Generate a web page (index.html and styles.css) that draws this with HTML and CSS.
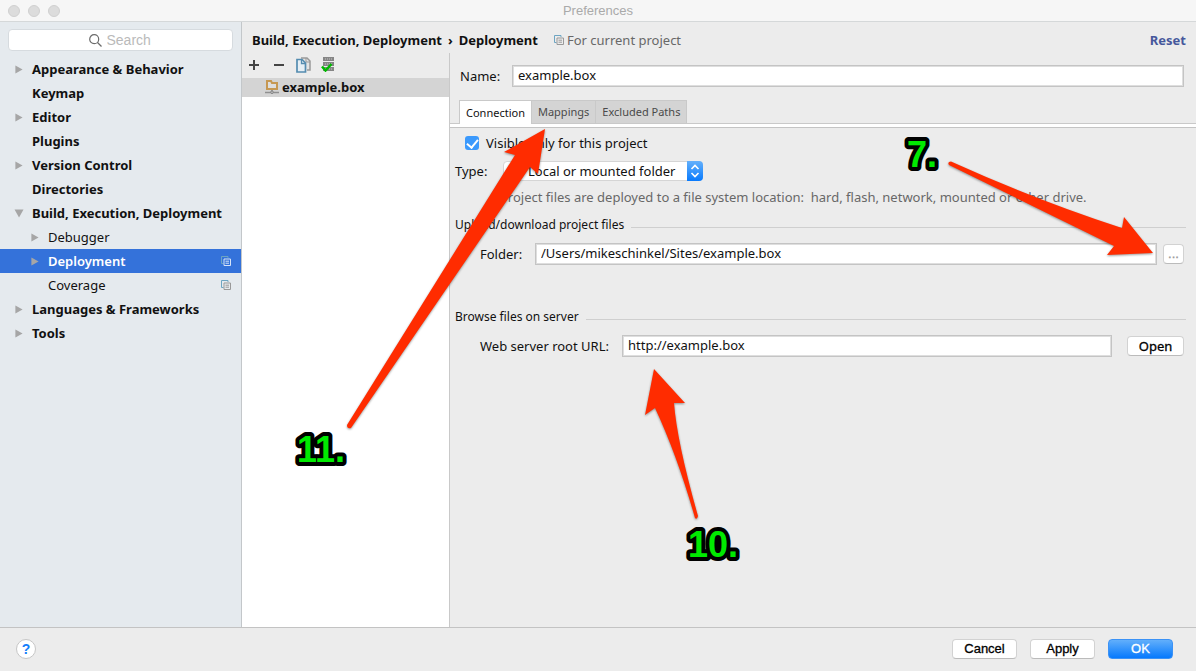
FILE: index.html
```html
<!DOCTYPE html>
<html lang="en">
<head>
<meta charset="utf-8">
<title>Preferences</title>
<link rel="stylesheet" href="styles.css">
</head>
<body>
<svg class="defs" width="0" height="0" aria-hidden="true">
  <symbol id="right" viewBox="0 0 8 10"><path d="M0 .5 8 5 0 9.500z" fill="#a6a6a6"/></symbol>
  <symbol id="down" viewBox="0 0 10 8"><path d="M.5 0h9L5 8z" fill="#a6a6a6"/></symbol>
  <symbol id="copy" viewBox="0 0 10 10"><path d="M2.500 7.500h-2v-7h6.500v1.500" fill="none" class="copy-back"/><path d="M3 3h6.500v6.500H3zM4.500 5.200h3.500M4.500 7.200h3.500" fill="none"/></symbol>
</svg>
<div class="window">
  <header class="titlebar">
    <div class="lights"><i></i><i></i><i></i></div>
    <h1>Preferences</h1>
  </header>
  <div class="body">
    <aside class="sidebar">
      <label class="search">
        <svg width="13" height="13" viewBox="0 0 13 13"><circle cx="5.200" cy="5.200" r="4.500" fill="none" stroke="#6b6b6b" stroke-width="1.200"/><path d="m8.500 8.500 4 4" stroke="#6b6b6b" stroke-width="1.300"/></svg>
        <input type="text" placeholder="Search" aria-label="Search">
      </label>
      <nav class="tree">
        <a href="#"><svg class="arrow"><use href="#right"/></svg>Appearance &amp; Behavior</a>
        <a href="#"><span class="arrow"></span>Keymap</a>
        <a href="#"><svg class="arrow"><use href="#right"/></svg>Editor</a>
        <a href="#"><span class="arrow"></span>Plugins</a>
        <a href="#"><svg class="arrow"><use href="#right"/></svg>Version Control</a>
        <a href="#"><span class="arrow"></span>Directories</a>
        <a href="#"><svg class="arrow"><use href="#down"/></svg>Build, Execution, Deployment</a>
        <a href="#" class="child"><svg class="arrow"><use href="#right"/></svg>Debugger</a>
        <a href="#" class="child selected"><svg class="arrow"><use href="#right"/></svg>Deployment<svg class="copy"><use href="#copy"/></svg></a>
        <a href="#" class="child"><span class="arrow"></span>Coverage<svg class="copy"><use href="#copy"/></svg></a>
        <a href="#"><svg class="arrow"><use href="#right"/></svg>Languages &amp; Frameworks</a>
        <a href="#"><svg class="arrow"><use href="#right"/></svg>Tools</a>
      </nav>
    </aside>
    <main class="content">
      <div class="crumbs">
        <h2><span>Build, Execution, Deployment</span> <span>›</span> <span>Deployment</span></h2>
        <svg class="copy"><use href="#copy"/></svg>
        <span class="scope">For current project</span>
        <a class="reset" href="#">Reset</a>
      </div>
      <div class="split">
        <section class="servers">
          <div class="toolbar">
            <button aria-label="Add"><svg width="10" height="10" viewBox="0 0 10 10"><path d="M0 5h10M5 0v10" stroke="#444" stroke-width="2"/></svg></button>
            <button aria-label="Remove"><svg width="10" height="10" viewBox="0 0 10 10"><path d="M0 5h10" stroke="#444" stroke-width="2"/></svg></button>
            <button aria-label="Copy"><svg width="15" height="16" viewBox="0 0 15 16"><path d="M5 1h6l3 3v9h-3" fill="#e4e4e4" stroke="#999" stroke-width="1.500"/><path d="M10 1v4h4" fill="none" stroke="#999"/><path d="M1 2.500h5L9.500 6v9H1z" fill="#e6eff5" stroke="#548cb0" stroke-width="1.700"/><path d="M5.500 3v3.500H9" fill="none" stroke="#548cb0" stroke-width="1.300"/></svg></button>
            <button aria-label="Use as default"><svg width="13" height="15" viewBox="0 0 13 15"><path d="M2 0h11v4H2zM2 5h11v4H2zM2 10h11v4H2z" fill="#858585"/><path d="M4 2h7M4 7h7M4 12h7" stroke="#c4c4c4" stroke-dasharray="1 1"/><path d="m1 9.500 3.500 4L10.500 7" fill="none" stroke="#00b900" stroke-width="2.500"/></svg></button>
          </div>
          <a class="server" href="#"><svg width="14" height="15" viewBox="0 0 14 15"><path d="M2 2h4l1 2h5v6H2z" fill="#dedede" stroke="#c69852" stroke-width="2"/><path d="M0 13.500h14M7 11v1" stroke="#909090" stroke-width="1.500"/><circle cx="7" cy="13.200" r="1.300" fill="#ccc" stroke="#808080"/></svg>example.box</a>
          <div class="list"></div>
        </section>
        <form class="settings">
          <div class="name"><label for="name">Name:</label><input class="field" id="name" value="example.box"></div>
          <div class="tabs" role="tablist">
            <button type="button" role="tab" aria-selected="true">Connection</button>
            <button type="button" role="tab">Mappings</button>
            <button type="button" role="tab">Excluded Paths</button>
          </div>
          <div class="panel">
            <label class="visible"><input type="checkbox" checked>Visible only for this project</label>
            <div class="type">
              <label for="type">Type:</label>
              <span class="combo"><select id="type"><option>Local or mounted folder</option></select>
              <svg viewBox="0 0 16 20"><path d="m4.500 8 3.500-3.500L11.500 8M4.500 12l3.500 3.500 3.500-3.500" fill="none" stroke="#fff" stroke-width="1.600"/></svg></span>
            </div>
            <p class="hint">Project files are deployed to a file system location:&nbsp; hard, flash, network, mounted or other drive.</p>
            <fieldset class="upload">
              <legend class="group"><span>Upload/download project files</span></legend>
              <div class="folder"><label for="folder">Folder:</label><input class="field" id="folder" value="/Users/mikeschinkel/Sites/example.box"><button type="button" class="push more" aria-label="Browse">...</button></div>
            </fieldset>
            <fieldset class="browse">
              <legend class="group"><span>Browse files on server</span></legend>
              <div class="url"><label for="url">Web server root URL:</label><input class="field" id="url" value="http://example.box"><button type="button" class="push open">Open</button></div>
            </fieldset>
          </div>
        </form>
      </div>
    </main>
  </div>
  <footer class="footer">
    <button class="help" aria-label="Help">?</button>
    <button class="push">Cancel</button>
    <button class="push">Apply</button>
    <button class="push primary">OK</button>
  </footer>
</div>
<svg class="notes" width="1196" height="671" viewBox="0 0 1196 671">
  <g class="note-arrows">
    <path d="M545 129 504 152 515 155 347 425Q347 429 351 428L530 167 538 174Z"/>
    <path d="M1153 253 1124 217 1122 228Q1036 200 951 161.500 947 162 949 165L1114 246 1107 255Z"/>
    <path d="M654 369 685 403 674 403Q677 442 698 516 697 520 695 518 677 455 655 408L645 415Z"/>
  </g>
  <g class="note-labels">
    <text x="907" y="167">7.</text>
    <text x="297" y="462">11.</text>
    <text x="688" y="557">10.</text>
  </g>
</svg>
</body>
</html>
```
FILE: styles.css
```css
* { box-sizing: border-box; }
body { margin: 0; font: 13px/20px "Noto Sans", "Open Sans", sans-serif; color: #111; background: #ececec; }
a { color: inherit; text-decoration: none; }
input, select, button { font: inherit; color: inherit; }
button { border: 0; padding: 0; background: none; }
fieldset { border: 0; margin: 0; padding: 0; min-width: 0; }
.defs { position: absolute; }
.window { display: flex; flex-direction: column; min-height: 100vh; }

.titlebar { display: grid; grid-template-columns: 1fr auto 1fr; align-items: center; height: 22px; padding: 0 8px; background: #f6f6f6; border-bottom: 1px solid #d5d8d9; }
.titlebar h1 { margin: 0; font: 13px/20px "Liberation Sans", sans-serif; color: #aaa; }
.lights { display: flex; gap: 8px; }
.lights i { width: 12px; height: 12px; border: 1px solid #d0d0d0; border-radius: 50%; background: #dcdcdc; }

.body { display: flex; flex: 1; }
.sidebar { width: 242px; flex: none; background: #e5eaee; border-right: 1px solid #c3c7ca; }
.search { display: flex; align-items: center; justify-content: center; gap: 5px; height: 22px; margin: 7px 8px 6px; border: 1px solid #d6dbdf; border-radius: 4px; background: #fff; }
.search input { width: 46px; padding: 0; border: 0; outline: 0; background: none; font: 14px/18px "Liberation Sans", sans-serif; }
.search input::placeholder { color: #bababa; }
.tree { display: flex; flex-direction: column; }
.tree a { display: flex; align-items: center; height: 24px; padding: 0 10px 0 14px; font-weight: 700; white-space: nowrap; }
.tree .child { padding-left: 30px; font-weight: 400; }
.tree .selected { background: #3472da; color: #fff; font-weight: 600; }
.arrow { width: 10px; height: 9px; margin-right: 8px; flex: none; }
.copy { width: 10px; height: 10px; flex: none; stroke: #999; }
.copy-back { stroke: #6da5c2; }
.tree .copy { margin-left: auto; }
.selected .copy, .selected .copy-back { stroke: #d7e4f8; }

.content { display: flex; flex: 1; flex-direction: column; min-width: 0; }
.crumbs { display: flex; align-items: center; height: 31px; padding: 4px 10px 0; white-space: nowrap; }
.crumbs h2 { display: flex; gap: 6px; margin: 0 16px 0 0; font-size: 13px; line-height: 20px; }
.scope { margin-left: 3px; color: #686868; }
.reset { margin-left: auto; color: #46589c; font-weight: 700; }
.split { display: flex; flex: 1; }
.servers { display: flex; flex-direction: column; width: 208px; flex: none; border-right: 1px solid #c9c9c9; }
.toolbar { display: flex; align-items: center; gap: 15px; height: 25px; padding: 0 7px 2px; }
.toolbar button { display: flex; }
.toolbar button:nth-child(n+3) { margin-right: -5px; }
.toolbar button:nth-child(3) { margin-left: -3px; }
.server { display: flex; align-items: center; gap: 3px; height: 19px; padding: 0 0 2px 23px; background: #d4d4d4; font-weight: 700; }
.list { flex: 1; background: #fff; }

.settings { flex: 1; min-width: 0; }
.name { display: flex; align-items: center; padding: 12px 12px 13px 10px; }
.name label { width: 52px; }
.field { flex: 1; min-width: 0; height: 22px; padding: 0 5px 2px; border: 1px solid #c4c4c4; background: #fff; box-shadow: inset 0 0 0 1px #dedede; outline: 0; }
.tabs { display: flex; height: 28px; padding-left: 9px; border-bottom: 1px solid #c4c4c4; background: linear-gradient(#ececec 23px, #c9c9c9 23px 24px, #fff 24px); }
.tabs button { height: 24px; padding: 0 6px; border: 1px solid #c9c9c9; border-left-width: 0; background: #d4d4d4; color: #4a4a4a; font-size: 11px; line-height: 22px; white-space: nowrap; }
.tabs [aria-selected] { border-left-width: 1px; border-bottom: 0; background: #fff; color: #111; }
.panel { padding: 4px 10px 0 5px; white-space: nowrap; }
.visible { display: flex; align-items: center; gap: 7px; padding-left: 10px; height: 22px; }
.visible input { display: grid; place-items: center; width: 14px; height: 14px; margin: 0; border-radius: 3px; background: #b8b8b8; appearance: none; }
.visible input:checked { background: #3b99fc; }
.visible input:checked::before { content: ""; width: 5px; height: 9px; margin-bottom: 2px; border: solid #fff; border-width: 0 2px 2px 0; transform: rotate(40deg); }
.type { display: flex; align-items: center; margin-top: 6px; height: 22px; }
.type label { width: 48px; }
.combo { position: relative; display: flex; width: 200px; height: 20px; }
.combo select { width: 100%; padding: 0 20px 0 24px; border: 1px solid #d5d5d5; border-radius: 4px; background: #fff; appearance: none; line-height: 18px; }
.combo svg { position: absolute; top: 0; right: 0; width: 16px; height: 20px; border-radius: 0 4px 4px 0; background: linear-gradient(#64b0fb, #087afd); pointer-events: none; }
.hint { margin: 5px 0 0 45px; color: #686868; }
.group { display: flex; align-items: center; gap: 7px; width: 100%; padding: 0; margin: 0; font-size: 12px; line-height: 20px; }
.group::after { content: ""; flex: 1; height: 1px; margin-top: 5px; background: #cfcfcf; }
.upload { margin-top: 8px; }
.folder, .url { display: flex; align-items: center; padding: 8px 2px 0 25px; }
.folder label { width: 55px; }
.url label { width: 142px; }
.browse { margin-top: 42px; }
.push { width: 65px; height: 20px; border: 1px solid #d2d2d2; border-bottom-color: #bbb; border-radius: 4px; background: #fff; font: 13px/18px "Liberation Sans", sans-serif; color: #000; -webkit-text-stroke: 0.3px; }
.more { width: 21px; margin-left: 6px; color: #999; }
.open { width: 57px; margin-left: 15px; font: 13px/18px "Noto Sans", sans-serif; }

.footer { display: flex; align-items: center; gap: 13px; height: 44px; padding: 0 23px 2px 16px; border-top: 1px solid #c3c3c3; }
.help { width: 20px; height: 20px; margin-right: auto; border: 1px solid #c6c6c6; border-radius: 50%; background: #fff; font: 700 14px/18px "Liberation Sans", sans-serif; color: #147efb; }
.primary { border-color: #3b92f6; background: linear-gradient(#62affb, #0679fd); color: #fff; }

.notes { position: absolute; top: 0; left: 0; pointer-events: none; }
.note-arrows { fill: #ff2c00; filter: drop-shadow(0 1px 1px #0006); }
.note-labels { font: 700 36px "Liberation Sans", sans-serif; fill: #00ea00; stroke: #000; stroke-width: 8px; stroke-linejoin: round; paint-order: stroke; }
```
